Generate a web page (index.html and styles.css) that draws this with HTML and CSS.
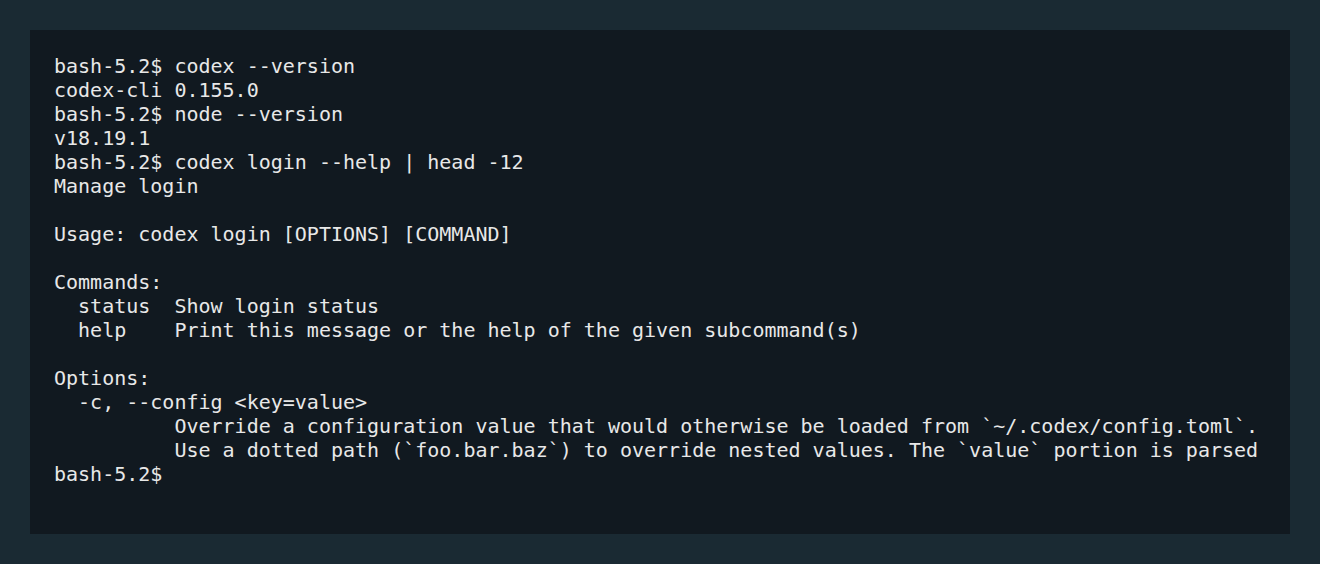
FILE: index.html
```html
<!DOCTYPE html>
<html>
<head>
<meta charset="utf-8">
<link rel="stylesheet" href="styles.css">
</head>
<body>
<main class="terminal"><pre class="output">bash-5.2$ codex --version
codex-cli 0.155.0
bash-5.2$ node --version
v18.19.1
bash-5.2$ codex login --help | head -12
Manage login

Usage: codex login [OPTIONS] [COMMAND]

Commands:
  status  Show login status
  help    Print this message or the help of the given subcommand(s)

Options:
  -c, --config &lt;key=value&gt;
          Override a configuration value that would otherwise be loaded from `~/.codex/config.toml`.
          Use a dotted path (`foo.bar.baz`) to override nested values. The `value` portion is parsed
bash-5.2$ </pre></main>
</body>
</html>
```

FILE: styles.css
```css
html, body {
  margin: 0;
  padding: 0;
}
body {
  background: #1a2a33;
  padding: 30px;
  width: 1320px;
  height: 564px;
  box-sizing: border-box;
  overflow: hidden;
}
.terminal {
  background: #111920;
  height: 504px;
  box-sizing: border-box;
  padding: 24px;
}
.output {
  margin: 0;
  font-family: "DejaVu Sans Mono", monospace;
  font-size: 20px;
  line-height: 24px;
  color: #e8e8e8;
  white-space: pre;
}
```
